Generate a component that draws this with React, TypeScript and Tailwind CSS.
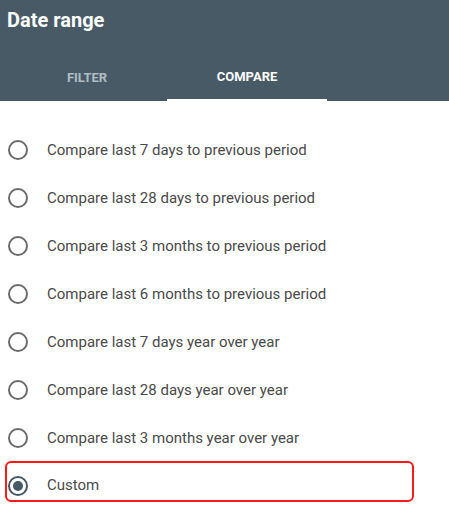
import React from "react";

const options = [
  "Compare last 7 days to previous period",
  "Compare last 28 days to previous period",
  "Compare last 3 months to previous period",
  "Compare last 6 months to previous period",
  "Compare last 7 days year over year",
  "Compare last 28 days year over year",
  "Compare last 3 months year over year",
];

function Radio({ checked }: { checked?: boolean }) {
  return (
    <div
      className={`w-[20px] h-[20px] rounded-full border-2 flex items-center justify-center shrink-0 ${
        checked ? "border-[#455a64]" : "border-[#6b6b6b]"
      }`}
    >
      {checked && <div className="w-[10px] h-[10px] rounded-full bg-[#455a64]" />}
    </div>
  );
}

export default function App() {
  return (
    <div
      className="w-[449px] h-[509px] bg-white overflow-hidden"
      style={{ fontFamily: "Roboto, 'Liberation Sans', sans-serif" }}
    >
      <div className="bg-[#475a66] h-[101px] flex flex-col">
        <div className="pl-[7px] pt-[4px] text-white text-[20px] font-bold leading-[32px]">
          Date range
        </div>
        <div className="flex pl-[7px] mt-auto">
          <div className="w-[160px] h-[50px] pt-[4px] flex items-center justify-center text-[13px] font-bold text-[#b0bcc4]">
            FILTER
          </div>
          <div className="w-[160px] h-[50px] pt-[4px] flex items-center justify-center text-[13px] font-bold text-white border-b-2 border-white">
            COMPARE
          </div>
        </div>
      </div>
      <div className="pt-[25px] px-[5px]">
        {options.map((o) => (
          <div key={o} className="h-[48px] flex items-center px-[3px] gap-[19px]">
            <Radio />
            <span className="text-[15px] text-[#4a4a4a]">{o}</span>
          </div>
        ))}
        <div className="h-[41px] mt-[-1px] w-[409px] pt-[8px] flex items-center px-[1px] gap-[19px] border-2 border-[#ff1a1a] rounded-[6px]">
          <Radio checked />
          <span className="text-[15px] text-[#4a4a4a]">Custom</span>
        </div>
      </div>
    </div>
  );
}
